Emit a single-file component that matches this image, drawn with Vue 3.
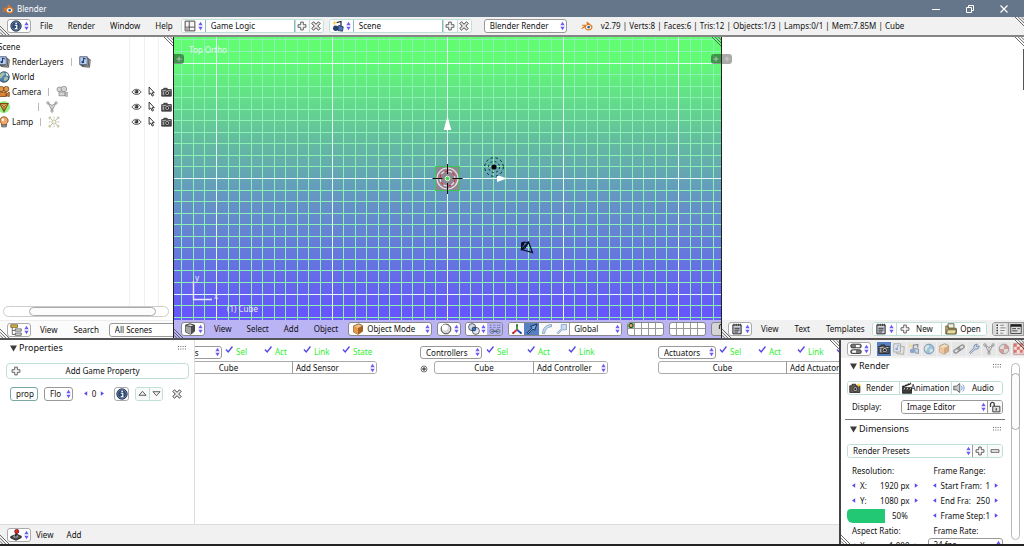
<script setup>
const rows = [
  { name: 'RenderLayers', icon: 'layers', data: 'layers', toggles: false },
  { name: 'World', icon: 'world', data: '', toggles: false },
  { name: 'Camera', icon: 'camobj', data: 'camdata', toggles: true },
  { name: 'Cube', icon: 'mesh', data: 'meshdata', toggles: true, active: true },
  { name: 'Lamp', icon: 'lamp', data: 'lampdata', toggles: true },
]

const step = 11.55
const originX = 273
const originY = 141
const range = (n) => Array.from({ length: n * 2 + 1 }, (_, i) => i - n)
const major = (i) => i % 10 === 0
const lines = [
  ...range(30).map((i) => ({ id: 'v' + i, d: `M${Math.round(originX + i * step) + 0.5} -20v330`, major: major(i) })),
  ...range(16).map((i) => ({ id: 'h' + i, d: `M-80 ${Math.round(originY + i * step) + 0.5}h710`, major: major(i) })),
].sort((a, b) => a.major - b.major)

const bricks = [
  { kind: 'Sensors', add: 'Add Sensor', checks: ['Sel', 'Act', 'Link', 'State'], cls: 'sensors' },
  { kind: 'Controllers', add: 'Add Controller', checks: ['Sel', 'Act', 'Link'], cls: 'controllers' },
  { kind: 'Actuators', add: 'Add Actuator', checks: ['Sel', 'Act', 'Link', 'State'], cls: 'actuators' },
]

const tabs = ['photo', 'layersdim', 'scenedim', 'worlddim', 'box', 'chain', 'wrench', 'meshdata', 'material', 'checker']

const resolution = [
  { label: 'X:', value: '1920 px' },
  { label: 'Y:', value: '1080 px' },
]
const frames = [
  { label: 'Start Fram:', value: '1' },
  { label: 'End Fra:', value: '250' },
  { label: 'Frame Step:', value: '1' },
]
</script>

<template>
  <svg class="defs" aria-hidden="true">
    <symbol id="arrows" viewBox="0 0 6 12"><path d="M3 1 5.600 5H.4zM3 11 .4 7h5.200z" fill="#6a5cf5" /></symbol>
    <symbol id="blender" viewBox="0 0 16 13">
      <path d="M8.600.8 15 6c1.400 3-1 6.500-5 6.500-3 0-5-2-5-4L1.200 10.600.4 9.600 4.600 6H1.300V4.700h6.500L7.200 1.900z" fill="#e27a1c" />
      <ellipse cx="10" cy="8" rx="3.400" ry="2.900" fill="#fff" /><circle cx="10.200" cy="8" r="1.700" fill="#2c5f96" />
    </symbol>
    <symbol id="info" viewBox="0 0 16 16">
      <circle cx="8" cy="8" r="7" fill="#2f4a73" stroke="#18263d" /><circle cx="8" cy="8" r="5.800" fill="none" stroke="#8fa6c9" stroke-width=".7" />
      <path d="M6.300 7h2.700v4.500h1M6.300 11.500h3.700" stroke="#fff" stroke-width="1.600" fill="none" /><circle cx="8.200" cy="4.400" r="1.200" fill="#fff" />
    </symbol>
    <symbol id="screen" viewBox="0 0 16 16">
      <path d="M1.500 1.500h13v13h-13z" fill="#f5f5f5" stroke="#444" stroke-width="1.300" /><path d="M7 2v12M7 9.500h7M2 9.500h5" stroke="#444" stroke-width="1.200" /><path d="M2.200 10.200h4v3.500h-4z" fill="#aaa" />
    </symbol>
    <symbol id="scene" viewBox="0 0 16 16">
      <path d="M6 3.500 12 2v8" stroke="#223" stroke-width="1.600" fill="none" /><circle cx="5" cy="11" r="3.600" fill="#26406f" /><path d="m9 7 6 2-1 6-6-1z" fill="#4c79bd" stroke="#1c2c4a" />
      <path d="M3.500 0 4.500 3l3 .8-3 1L3.500 8l-1-3.200L0 4l2.500-1z" fill="#f2d35b" />
    </symbol>
    <symbol id="plus" viewBox="0 0 14 14"><path d="M5.200 1.500h3.600v3.700h3.700v3.600H8.800v3.700H5.200V8.800H1.500V5.200h3.700z" fill="#fafafa" stroke="#555" stroke-width="1.300" /></symbol>
    <symbol id="minus" viewBox="0 0 14 14"><path d="M1.500 5.200h11v3.600h-11z" fill="#fafafa" stroke="#555" stroke-width="1.300" /></symbol>
    <symbol id="cross" viewBox="0 0 14 14"><path d="m3.500 1.200 3.500 3.400 3.500-3.400 2.300 2.300L9.400 7l3.400 3.500-2.300 2.300L7 9.400l-3.500 3.400-2.300-2.300L4.600 7 1.200 3.500z" fill="#eee" stroke="#333" stroke-width="1.300" /></symbol>
    <symbol id="layers" viewBox="0 0 16 16">
      <path d="m5 4 10 1-1 10-10-1z" fill="#d8d2b8" stroke="#333" /><path d="m3 2.500 10 .7-.5 10-10-.7z" fill="#eee" stroke="#333" /><path d="M1 1h10v10.500H1z" fill="#bcd0ee" stroke="#2b3c5c" />
      <path d="M6 8V3l3 1" stroke="#20407a" stroke-width="1.500" fill="none" /><circle cx="5" cy="8" r="1.800" fill="#20407a" />
    </symbol>
    <symbol id="layersdim" viewBox="0 0 16 16"><g opacity=".55"><path d="m6 4 9 1-1 10-9-1z" fill="#e8e4d5" stroke="#666" /><path d="M1 1h9v11H1z" fill="#dbe4f2" stroke="#667" /><circle cx="5" cy="8" r="1.800" fill="#5876a5" /><path d="M6 8V3l3 1" stroke="#5876a5" fill="none" /></g></symbol>
    <symbol id="scenedim" viewBox="0 0 16 16"><g opacity=".65"><path d="M7 9V3l6-1v4" stroke="#445" stroke-width="1.400" fill="none" /><circle cx="5.500" cy="10.500" r="3" fill="#5b84bd" /><path d="m9 7 5 1v6l-5-1z" fill="#a9c6ea" stroke="#456" /><circle cx="3.500" cy="4" r="2.400" fill="#f1dc86" /></g></symbol>
    <symbol id="world" viewBox="0 0 16 16"><circle cx="8" cy="8" r="7" fill="#4f81ae" stroke="#1d3044" /><path d="M3 4c3-3 6-2 6 0S6 6 5 9 2 8 2 7zm6 4c3-1 5 0 4 3l-4 3c-1-2-2-4 0-6z" fill="#a3c0a2" /><path d="M10 2c3 1 4 3 4 5l-3-1z" fill="#dfe9ef" /></symbol>
    <symbol id="worlddim" viewBox="0 0 16 16"><circle cx="8" cy="8" r="6.500" fill="#9cc2df" stroke="#6c8799" /><path d="M3 5c3-3 6-2 5 0S5 7 5 10 2 9 2 8zm6 3c3-1 5 0 4 3l-3 2c-1-2-2-4-1-5z" fill="#d6e6dc" /></symbol>
    <symbol id="camobj" viewBox="0 0 16 16"><circle cx="4.500" cy="4" r="3.500" fill="#e39a4f" stroke="#6b3b0d" /><circle cx="11" cy="4" r="3.500" fill="#e39a4f" stroke="#6b3b0d" /><path d="M2 8h9v6H2zM11 11l4-3v6l-4-1z" fill="#d88537" stroke="#6b3b0d" /></symbol>
    <symbol id="camdata" viewBox="0 0 16 16"><g fill="#d4d4d4" stroke="#888"><circle cx="4.500" cy="4.500" r="3.200" /><circle cx="10.500" cy="4" r="3.700" /><path d="M4 8h8v5H4zM12 10l3-2v6l-3-1z" /></g></symbol>
    <symbol id="mesh" viewBox="0 0 16 16"><circle cx="8" cy="8" r="8" fill="#8ff07f" /><path d="M2.500 3.500h11L8 14z" fill="#e8b163" stroke="#7c4a10" stroke-width="1.400" /><path d="m5 5 3 3 3-3M8 8v5" stroke="#7c4a10" fill="none" /></symbol>
    <symbol id="meshdata" viewBox="0 0 16 16"><path d="m3 3 5 3 5-3-5 10z" fill="#eee" stroke="#8a8a8a" stroke-width="1.200" /><path d="M8 6v7" stroke="#999" /><g fill="#fff" stroke="#777"><circle cx="2.500" cy="2.500" r="1.500" /><circle cx="13.500" cy="2.500" r="1.500" /><circle cx="8" cy="13.500" r="1.500" /></g></symbol>
    <symbol id="lamp" viewBox="0 0 16 16"><path d="M4.500 10C0 6 4 1 8 1s8 5 3.500 9v2h-7z" fill="#f0a968" stroke="#6b3b0d" /><path d="M5 12h6v2.500H5z" fill="#bbb" stroke="#444" /><circle cx="6.500" cy="5" r="1.600" fill="#fff" /></symbol>
    <symbol id="lampdata" viewBox="0 0 16 16"><g fill="#fbf8e4" stroke="#aaa58a"><circle cx="8" cy="8" r="2.800" /><circle cx="2.500" cy="2.500" r="1.300" /><circle cx="13.500" cy="2.500" r="1.300" /><circle cx="2.500" cy="13.500" r="1.300" /><circle cx="13.500" cy="13.500" r="1.300" /><path d="M8 1v2M8 13v2M1 8h2M13 8h2M4 4l1.500 1.500M12 4l-1.500 1.500M4 12l1.500-1.500M12 12l-1.500-1.500" /></g></symbol>
    <symbol id="eye" viewBox="0 0 16 12"><path d="M1 6c4-5.500 10-5.500 14 0-4 5-10 5-14 0z" fill="#fff" stroke="#333" stroke-width="1.200" /><circle cx="8" cy="5.500" r="2.900" fill="#333" /><circle cx="7" cy="4.500" r=".9" fill="#fff" /></symbol>
    <symbol id="cursor" viewBox="0 0 10 16"><path d="M1.500 1.500v10.700l2.500-2 2 4.500 2-1-2-4h3z" fill="#fff" stroke="#222" stroke-width="1.300" /></symbol>
    <symbol id="photo" viewBox="0 0 16 14"><path d="M1 3.500h3V1.500h5v2h6v9.500H1z" fill="#585858" stroke="#1c1c1c" /><path d="M2 5h12" stroke="#ddd" /><circle cx="9" cy="8.500" r="3.400" fill="#ccc" stroke="#111" /><circle cx="9" cy="8.500" r="1.600" fill="#222" /><path d="M2.500 6.500h2v5h-2z" fill="#aaa" /></symbol>
    <symbol id="flash" viewBox="0 0 16 14"><path d="M1 4h3V2h5v2h5.500v9H1z" fill="#655b52" stroke="#1c1c1c" /><circle cx="8.500" cy="8.500" r="3.200" fill="#ccc" stroke="#111" /><circle cx="8.500" cy="8.500" r="1.500" fill="#222" /><path d="m13 0 1 2 2 1-2 1-1 2-1-2-2-1 2-1z" fill="#ffd632" /></symbol>
    <symbol id="clap" viewBox="0 0 16 16"><path d="M2 7.500h12V15H2z" fill="#3d3d3d" stroke="#111" /><path d="m1 5.500 12-5 .8 2.600L2 7.500z" fill="#222" /><path d="m4 4.300 1.500 1.500M7.500 3l1.400 1.500M11 1.500l1.400 1.500M5 8l-1 2M9 8l-1 2M13 8l-1 2" stroke="#fff" /></symbol>
    <symbol id="speaker" viewBox="0 0 16 14"><path d="M1 4.500h3.500L9 1v12L4.500 9.500H1z" fill="#c9c9c9" stroke="#444" /><path d="M11 4c1.500 2 1.500 4 0 6M13 2.500c2.500 3 2.500 6 0 9" stroke="#6d9ad6" stroke-width="1.300" fill="none" /></symbol>
    <symbol id="tree" viewBox="0 0 16 16"><path d="M1 1h9v3.500H1z" fill="#d9b44a" stroke="#6b5415" /><path d="M3 5v9h4M3 8.500h4" stroke="#444" fill="none" /><path d="M7 6.500h8v3H7zM7 12h8v3H7z" fill="#e6e6e6" stroke="#444" /></symbol>
    <symbol id="cube" viewBox="0 0 16 16"><path d="m2 3 6-2 6 2v8l-5 4-7-3z" fill="#ddd" stroke="#222" stroke-width="1.200" /><path d="M9 5v10l5-4V3z" fill="#4c4c4c" /><path d="m2 3 7 2v10l-7-3z" fill="#a5a5a5" /><path d="m2 3 7 2 5-2" stroke="#222" fill="none" /></symbol>
    <symbol id="object" viewBox="0 0 16 16"><path d="m2 4 7-3 5 2.500V11l-6 4-6-3z" fill="#f0c187" stroke="#6b3b0d" /><path d="m2 4 6 2.500V15l-6-3z" fill="#e39a4f" /><path d="m8 6.500 6-3V11l-6 4z" fill="#a5621f" /></symbol>
    <symbol id="box" viewBox="0 0 16 16"><g opacity=".7"><path d="m2 4 7-3 5 2.500V11l-6 4-6-3z" fill="#f7dcb5" stroke="#80603a" /><path d="m2 4 6 2.500V15l-6-3z" fill="#f0bc83" /><path d="m8 6.500 6-3V11l-6 4z" fill="#cc9159" /></g></symbol>
    <symbol id="sphere" viewBox="0 0 16 16"><circle cx="8" cy="8" r="6.500" fill="#d7d7d7" stroke="#333" stroke-width="1.200" /><circle cx="6.500" cy="6" r="4" fill="#fff" /></symbol>
    <symbol id="pivot" viewBox="0 0 16 16"><circle cx="5.500" cy="5.500" r="4.700" fill="#cfd9ea" stroke="#334" /><circle cx="10.500" cy="10.500" r="4.700" fill="#dde7f6" fill-opacity=".8" stroke="#334" /><circle cx="8" cy="8" r="2.500" fill="#3d75c9" stroke="#134" /></symbol>
    <symbol id="points" viewBox="0 0 16 16"><path d="M1 3h3M6 3h3M11 3h4M1 6h3M6 6h3M11 6h4" stroke="#5d6d92" stroke-dasharray="1.500 1" stroke-width="1.500" /><g fill="#b9c6dd" stroke="#56668a"><circle cx="4" cy="11" r="2.800" /><circle cx="12" cy="11" r="2.800" /></g><path d="M3 11h10" stroke="#445577" stroke-width="1.400" /></symbol>
    <symbol id="axis" viewBox="0 0 16 16"><path d="M8 9V1.500" stroke="#3b9a3b" stroke-width="2.600" /><path d="m8 9-6 5" stroke="#d33" stroke-width="2.600" /><path d="m8 9 6 5" stroke="#3356c8" stroke-width="2.600" /><path d="m2 14 2-1.500M14 14l-2-1.500M8 2v2" stroke="#222" /></symbol>
    <symbol id="move" viewBox="0 0 16 16"><path d="M1.500 13 8 6.500 6 4.500 14.500 1.500l-3 8.500-2-2L3 14.500z" fill="#7ea9dc" stroke="#10284c" stroke-width="1.200" /></symbol>
    <symbol id="rotate" viewBox="0 0 16 16"><path d="M2 14C2 7 7 2 14 2v3C9 5 5 9 5 14z" fill="#c7dbf3" stroke="#7a95b8" /></symbol>
    <symbol id="scale" viewBox="0 0 16 16"><path d="M1.500 13 7 7.500V2h7v7H8.500L3 14.500z" fill="#c7dbf3" stroke="#7a95b8" /></symbol>
    <symbol id="textdoc" viewBox="0 0 16 16"><path d="M2.500 2.500h11v12h-11z" fill="#c9ced8" stroke="#222" stroke-width="1.300" /><path d="M4 1v3M7 1v3M10 1v3M12.500 1v3" stroke="#333" stroke-width="1.200" /><path d="M4.500 7h7M4.500 9.500h7M4.500 12h5" stroke="#222" stroke-width="1.200" /></symbol>
    <symbol id="folder" viewBox="0 0 16 16"><path d="M4 1h8v6H4z" fill="#eef3d8" stroke="#444" /><path d="M1 4h3v3h11v7.500H1z" fill="#c9b678" stroke="#4c4220" /><path d="M3 9h12l-1 5.500H2z" fill="#e6d9a2" stroke="#4c4220" /></symbol>
    <symbol id="numbers" viewBox="0 0 16 16"><path d="M1 1h14v14H1z" fill="#eee" /><path d="M2 3h2M2 6.500h2M2 10h2M2 13.500h2" stroke="#222" stroke-width="1.800" /><path d="M7 3h5M7 6.500h7M7 10h6M7 13.500h4" stroke="#666" /></symbol>
    <symbol id="wrap" viewBox="0 0 16 16"><path d="M1 2h14v12H1z" fill="#ddd" stroke="#222" /><path d="M1 3.500h14" stroke="#222" stroke-width="3" /><path d="M3 7.500h5M10 7.500h3M3 10.500h7" stroke="#333" stroke-width="1.200" /></symbol>
    <symbol id="props" viewBox="0 0 16 16"><g stroke="#222"><rect x="1" y="1.500" width="14" height="5" rx="2" fill="#777" /><rect x="1" y="9" width="14" height="5" rx="2" fill="#777" /></g><path d="M8 2.500h5v3H8zM3 10h5v3H3z" fill="#fff" /></symbol>
    <symbol id="chain" viewBox="0 0 16 16"><g fill="none" stroke="#8e8e8e" stroke-width="1.800"><rect x="1" y="7.500" width="9" height="4.500" rx="2.200" transform="rotate(-35 5.500 10)" /><rect x="6" y="4" width="9" height="4.500" rx="2.200" transform="rotate(-35 10.500 6)" /></g></symbol>
    <symbol id="wrench" viewBox="0 0 16 16"><path d="M2 12.500 8 6.500C7 3 10 1 12.500 1.700L10.500 4l1.500 1.600 2.500-2C15.500 7 12.500 9 9.500 8l-6 6.200z" fill="#cfe0f4" stroke="#6f87a7" stroke-width="1.200" /></symbol>
    <symbol id="material" viewBox="0 0 16 16"><circle cx="8" cy="8" r="6.500" fill="#ddd" stroke="#888" /><path d="M8 8V1.500A6.500 6.500 0 0 1 14.500 8zM8 8v6.500A6.500 6.500 0 0 1 1.500 8z" fill="#cf8d86" opacity=".8" /></symbol>
    <symbol id="checker" viewBox="0 0 16 16"><path d="M1 1h14v14H1z" fill="#f6e3e0" stroke="#b77" /><path d="M1 1h4v4H1zM9 1h4v4H9zM5 5h4v4H5zM13 5h2v4h-2zM1 9h4v4H1zM9 9h4v4H9z" fill="#d8766c" /></symbol>
    <symbol id="lock" viewBox="0 0 16 16"><path d="M2 8V4.500C2 1 7 1 7 4.500V7" stroke="#444" stroke-width="1.800" fill="none" /><path d="M5 7h9.500v7.500H5z" fill="#ddd" stroke="#333" stroke-width="1.200" /><path d="M9.700 9.500v3" stroke="#333" stroke-width="1.600" /></symbol>
    <symbol id="joystick" viewBox="0 0 16 16"><path d="m1 10 8-3 6 2.500v2L8 15l-7-3z" fill="#4c4c4c" stroke="#111" /><ellipse cx="7.500" cy="10" rx="3.500" ry="1.600" fill="#999" /><path d="m7.500 10 1-6" stroke="#222" stroke-width="1.800" /><circle cx="9" cy="3.200" r="2.700" fill="#d92c22" stroke="#701" /></symbol>
    <symbol id="up" viewBox="0 0 14 10"><path d="m7 1.500 5.500 6.300h-11z" fill="#eee" stroke="#444" stroke-width="1.300" /></symbol>
    <symbol id="down" viewBox="0 0 14 10"><path d="M7 8.500 1.500 2.200h11z" fill="#eee" stroke="#444" stroke-width="1.300" /></symbol>
    <symbol id="left" viewBox="0 0 5 6"><path d="M0 3 4 .2v5.600z" fill="#5a4bf0" /></symbol>
    <symbol id="right" viewBox="0 0 5 6"><path d="M5 3 1 .2v5.600z" fill="#5a4bf0" /></symbol>
    <symbol id="tri" viewBox="0 0 8 8"><path d="M0 .5h8L4 7.500z" fill="#3c3c3c" /></symbol>
    <symbol id="hatch" viewBox="0 0 10 10"><path d="M0 0l10 10M3.500 0 10 6.500M7 0l3 3" stroke="#444" stroke-width=".9" /></symbol>
    <symbol id="grip" viewBox="0 0 8 4"><path d="M0 .5h8M0 3h8" stroke="#666" stroke-dasharray="1 1.300" /></symbol>
    <symbol id="check" viewBox="0 0 8 8"><path d="m1 3.500 2.200 2.500L7.500 .5" fill="none" stroke="#5346e0" stroke-width="1.400" /></symbol>
  </svg>

  <div class="app">
    <header class="title">
      <svg class="logo"><use href="#blender" /></svg>
      <span class="caption">Blender</span>
      <div class="winbtns">
        <button aria-label="Minimize"><svg viewBox="0 0 10 10"><path d="M1 5.500h8" stroke="#fff" /></svg></button>
        <button aria-label="Restore"><svg viewBox="0 0 10 10"><path d="M1.500 3.500h5v5h-5zM3.500 3V1.500h5v5H7" fill="none" stroke="#fff" /></svg></button>
        <button aria-label="Close"><svg viewBox="0 0 10 10"><path d="m1.500 1.500 7 7m0-7-7 7" stroke="#fff" stroke-width="1.200" /></svg></button>
      </div>
    </header>

    <nav class="bar info">
      <svg class="hatch bl"><use href="#hatch" /></svg>
      <svg class="hatch tr"><use href="#hatch" /></svg>
      <button class="ed" aria-label="Editor type"><svg class="ic"><use href="#info" /></svg><svg class="ar"><use href="#arrows" /></svg></button>
      <div class="menus main">
        <button>File</button><button>Render</button><button>Window</button><button>Help</button>
      </div>
      <div class="group">
        <button class="ed" aria-label="Browse screens"><svg class="ic"><use href="#screen" /></svg><svg class="ar"><use href="#arrows" /></svg></button>
        <input class="name" value="Game Logic" aria-label="Screen name">
        <button class="sq" aria-label="Add screen"><svg class="sm"><use href="#plus" /></svg></button>
        <button class="sq" aria-label="Delete screen"><svg class="sm"><use href="#cross" /></svg></button>
      </div>
      <div class="group second">
        <button class="ed" aria-label="Browse scenes"><svg class="ic"><use href="#scene" /></svg><svg class="ar"><use href="#arrows" /></svg></button>
        <input class="name" value="Scene" aria-label="Scene name">
        <button class="sq" aria-label="Add scene"><svg class="sm"><use href="#plus" /></svg></button>
        <button class="sq" aria-label="Delete scene"><svg class="sm"><use href="#cross" /></svg></button>
      </div>
      <span class="pick engine"><select aria-label="Render engine"><option>Blender Render</option></select><svg class="ar"><use href="#arrows" /></svg></span>
      <svg class="logo stat"><use href="#blender" /></svg>
      <span class="stats">v2.79 | Verts:8 | Faces:6 | Tris:12 | Objects:1/3 | Lamps:0/1 | Mem:7.85M | Cube</span>
    </nav>

    <main class="upper">
      <section class="area outliner">
        <svg class="hatch tr"><use href="#hatch" /></svg>
        <div class="tree">
          <div class="row scene">Scene</div>
          <div v-for="r in rows" :key="r.name" class="row">
            <svg class="ic"><use :href="'#' + r.icon" /></svg>
            <span class="label" :class="{ active: r.active }">{{ r.name }}</span>
            <template v-if="r.data"><i class="sep"></i><svg class="ic"><use :href="'#' + r.data" /></svg></template>
            <span v-if="r.toggles" class="toggles">
              <button aria-label="Visibility"><svg class="eye"><use href="#eye" /></svg></button>
              <button aria-label="Selectability"><svg class="cur"><use href="#cursor" /></svg></button>
              <button aria-label="Renderability"><svg class="pho"><use href="#photo" /></svg></button>
            </span>
          </div>
          <div class="rules"><i></i><i></i><i></i></div>
        </div>
        <div class="hscroll"><i></i></div>
        <div class="bar">
          <svg class="hatch bl"><use href="#hatch" /></svg>
          <button class="ed" aria-label="Editor type"><svg class="ic"><use href="#tree" /></svg><svg class="ar"><use href="#arrows" /></svg></button>
          <div class="menus"><button>View</button><button>Search</button></div>
          <span class="pick scenes"><select aria-label="Display mode"><option>All Scenes</option></select></span>
        </div>
      </section>

      <section class="area viewport">
        <div class="canvas">
          <svg class="grid3d" viewBox="0 0 547 283" preserveAspectRatio="xMidYMid slice" aria-label="3D view">
            <g fill="none" shape-rendering="crispEdges">
              <path v-for="l in lines" :key="l.id" :d="l.d" :stroke="l.major ? '#e4faf4' : '#8cf2b4'" />
            </g>
            <path d="m273.500 79 3.800 14h-7.600zM333 141.500 323 138v7z" fill="#fff" />
            <path d="M261.500 129.500h24v24h-24z" fill="#8e8793" stroke="#35cf4b" />
            <circle cx="273.500" cy="141.500" r="10.500" fill="none" stroke="#e9dfe6" stroke-width="1.200" />
            <circle cx="273.500" cy="141.500" r="7.500" fill="none" stroke="#f3e4e8" stroke-width="1.200" />
            <circle cx="273.500" cy="141.500" r="7.500" fill="none" stroke="#c73545" stroke-width="1.400" stroke-dasharray="4 4" />
            <path d="M258.500 141.500h10M278.500 141.500h10M273.500 127v10M273.500 146v11" stroke="#111" />
            <circle cx="273.500" cy="141.500" r="2.300" fill="#3fdc4c" stroke="#fff" stroke-width=".8" />
            <g fill="none" stroke="#0c2a2a"><circle cx="320" cy="130" r="9.300" stroke-dasharray="2.500 2.500" /><circle cx="320" cy="130" r="5.500" stroke-dasharray="2 2.300" /></g>
            <circle cx="320" cy="130" r="2.600" fill="#050505" />
            <path d="m354.500 205 4 10.500-11-3zM354.500 205l-6.500.5-.5 7 3.500-1.500z" fill="none" stroke="#081024" stroke-width="1.200" />
            <path d="m347 206.500 4-2-1 3.500-3 3z" fill="#081024" />
            <path d="M19.500 244v18.500H38" stroke="#e9ecff" fill="none" stroke-width="1.400" />
          </svg>
          <span class="vt top">Top Ortho</span>
          <span class="vt ay">y</span><span class="vt ax">x</span>
          <span class="vt obj">(1) Cube</span>
          <button class="tab left" aria-label="Show tool shelf"><svg viewBox="0 0 10 10"><path d="M5 2.500v5M2.500 5h5" stroke="#bbb" /></svg></button>
          <button class="tab right" aria-label="Show properties"><svg viewBox="0 0 10 10"><path d="M5 2.500v5M2.500 5h5" stroke="#bbb" /></svg></button>
          <svg class="hatch tr"><use href="#hatch" /></svg>
        </div>
        <div class="bar purple">
          <svg class="hatch bl"><use href="#hatch" /></svg>
          <button class="ed" aria-label="Editor type"><svg class="ic"><use href="#cube" /></svg><svg class="ar"><use href="#arrows" /></svg></button>
          <div class="menus"><button>View</button><button>Select</button><button>Add</button><button>Object</button></div>
          <span class="pick mode"><svg class="ic pre"><use href="#object" /></svg><select aria-label="Mode"><option>Object Mode</option></select><svg class="ar"><use href="#arrows" /></svg></span>
          <button class="ed" aria-label="Viewport shading"><svg class="ic"><use href="#sphere" /></svg><svg class="ar"><use href="#arrows" /></svg></button>
          <div class="group pivot">
            <button class="ed" aria-label="Pivot point"><svg class="ic"><use href="#pivot" /></svg><svg class="ar"><use href="#arrows" /></svg></button>
            <button class="sq dim" aria-label="Manipulate centers"><svg class="ic"><use href="#points" /></svg></button>
          </div>
          <div class="group manip">
            <button class="sq" aria-label="Manipulator"><svg class="ic"><use href="#axis" /></svg></button>
            <button class="sq on" aria-label="Translate"><svg class="ic"><use href="#move" /></svg></button>
            <button class="sq" aria-label="Rotate"><svg class="ic"><use href="#rotate" /></svg></button>
            <button class="sq" aria-label="Scale"><svg class="ic"><use href="#scale" /></svg></button>
            <span class="pick orient"><select aria-label="Orientation"><option>Global</option></select><svg class="ar"><use href="#arrows" /></svg></span>
          </div>
          <div class="layers"><button v-for="n in 10" :key="n" :class="{ lit: n === 1 }" :aria-label="'Layer ' + n"></button></div>
          <div class="layers"><button v-for="n in 10" :key="n" :aria-label="'Layer ' + (n + 10)"></button></div>
          <button class="ed cut" aria-label="Lock to scene"><svg class="ic"><use href="#lock" /></svg></button>
        </div>
      </section>

      <section class="area texted">
        <svg class="hatch tr"><use href="#hatch" /></svg>
        <div class="page">
          <button class="tab left pale" aria-label="Show text properties"><svg viewBox="0 0 10 10"><path d="M5 2.500v5M2.500 5h5" stroke="#ccc" /></svg></button>
          <i class="thumb"></i>
        </div>
        <div class="bar">
          <svg class="hatch bl"><use href="#hatch" /></svg>
          <button class="ed" aria-label="Editor type"><svg class="ic"><use href="#textdoc" /></svg><svg class="ar"><use href="#arrows" /></svg></button>
          <div class="menus"><button>View</button><button>Text</button><button>Templates</button></div>
          <div class="group files">
            <button class="ed" aria-label="Browse text"><svg class="ic"><use href="#textdoc" /></svg><svg class="ar"><use href="#arrows" /></svg></button>
            <button class="lab"><svg class="sm"><use href="#plus" /></svg><span>New</span></button>
            <button class="lab"><svg class="ic"><use href="#folder" /></svg><span>Open</span></button>
          </div>
          <div class="group grey">
            <button class="sq" aria-label="Line numbers"><svg class="ic"><use href="#numbers" /></svg></button>
            <button class="sq" aria-label="Word wrap"><svg class="ic"><use href="#wrap" /></svg></button>
            <button class="sq" aria-label="Syntax highlight"><svg class="ic"><use href="#wrap" /></svg></button>
          </div>
        </div>
      </section>
    </main>

    <main class="lower">
      <section class="area logic">
        <svg class="hatch tr"><use href="#hatch" /></svg>
        <div class="lbody">
          <aside class="gameprops">
            <h2><svg class="tri"><use href="#tri" /></svg>Properties<svg class="grip"><use href="#grip" /></svg></h2>
            <button class="wide"><svg class="sm"><use href="#plus" /></svg><span>Add Game Property</span></button>
            <div class="prop">
              <input class="box pname" value="prop" aria-label="Property name">
              <span class="pick ptype"><select aria-label="Property type"><option>Flo</option></select><svg class="ar"><use href="#arrows" /></svg></span>
              <span class="num pval"><svg class="h"><use href="#left" /></svg><input value="0" aria-label="Property value"><svg class="h"><use href="#right" /></svg></span>
              <button class="box one" aria-label="Debug"><svg class="ic"><use href="#info" /></svg></button>
              <div class="group upd">
                <button class="sq" aria-label="Move up"><svg class="ud"><use href="#up" /></svg></button>
                <button class="sq" aria-label="Move down"><svg class="ud"><use href="#down" /></svg></button>
              </div>
              <button class="bare" aria-label="Remove property"><svg class="sm"><use href="#cross" /></svg></button>
            </div>
          </aside>
          <div class="bricks">
            <div v-for="b in bricks" :key="b.kind" class="brick" :class="b.cls">
              <div class="bh">
                <span class="pick kind"><select :aria-label="b.kind"><option>{{ b.kind }}</option></select><svg class="ar"><use href="#arrows" /></svg></span>
                <label v-for="c in b.checks" :key="c" class="chk"><input type="checkbox" checked><svg><use href="#check" /></svg><span>{{ c }}</span></label>
              </div>
              <div class="bl2">
                <button v-if="b.cls === 'controllers'" class="bare exp" aria-label="Expand"><svg viewBox="0 0 8 8"><circle cx="4" cy="4" r="3" fill="#fff" stroke="#555" stroke-width=".8" /><path d="M4 2v4M2 4h4" stroke="#222" /></svg></button>
                <div class="group addrow">
                  <button class="cube">Cube</button>
                  <span class="pick add"><select :aria-label="b.add"><option>{{ b.add }}</option></select><svg class="ar"><use href="#arrows" /></svg></span>
                </div>
              </div>
            </div>
          </div>
        </div>
        <div class="bar foot">
          <svg class="hatch bl"><use href="#hatch" /></svg>
          <button class="ed" aria-label="Editor type"><svg class="ic"><use href="#joystick" /></svg><svg class="ar"><use href="#arrows" /></svg></button>
          <div class="menus"><button>View</button><button>Add</button></div>
        </div>
      </section>

      <section class="area propsed">
        <svg class="hatch tr"><use href="#hatch" /></svg>
        <svg class="hatch bl"><use href="#hatch" /></svg>
        <div class="bar">
          <button class="ed" aria-label="Editor type"><svg class="ic"><use href="#props" /></svg><svg class="ar"><use href="#arrows" /></svg></button>
          <div class="tabs"><button v-for="(t, i) in tabs" :key="t" :class="{ on: i === 0 }" :aria-label="t"><svg class="ic"><use :href="'#' + t" /></svg></button></div>
        </div>
        <div class="pbody">
          <div class="panels">
            <h2><svg class="tri"><use href="#tri" /></svg>Render<svg class="grip"><use href="#grip" /></svg></h2>
            <div class="group three">
              <button class="lab"><svg class="ic"><use href="#flash" /></svg><span>Render</span></button>
              <button class="lab anim"><svg class="ic"><use href="#clap" /></svg><span>Animation</span></button>
              <button class="lab"><svg class="ic"><use href="#speaker" /></svg><span>Audio</span></button>
            </div>
            <div class="disp">
              <label for="display">Display:</label>
              <div class="group">
                <span class="pick"><select id="display"><option>Image Editor</option></select><svg class="ar"><use href="#arrows" /></svg></span>
                <button class="sq" aria-label="Lock interface"><svg class="ic"><use href="#lock" /></svg></button>
              </div>
            </div>
            <hr>
            <h2><svg class="tri"><use href="#tri" /></svg>Dimensions<svg class="grip"><use href="#grip" /></svg></h2>
            <div class="group presets">
              <span class="pick"><select aria-label="Render presets"><option>Render Presets</option></select><svg class="ar"><use href="#arrows" /></svg></span>
              <button class="sq" aria-label="Add preset"><svg class="sm"><use href="#plus" /></svg></button>
              <button class="sq" aria-label="Remove preset"><svg class="sm"><use href="#minus" /></svg></button>
            </div>
            <div class="two">
              <div class="col">
                <div class="cap">Resolution:</div>
                <label v-for="f in resolution" :key="f.label" class="num"><svg class="h"><use href="#left" /></svg><span>{{ f.label }}</span><input :value="f.value"><svg class="h"><use href="#right" /></svg></label>
                <label class="pct"><input type="range" min="0" max="100" value="50" aria-label="Resolution percentage"><span>50%</span></label>
                <div class="cap next">Aspect Ratio:</div>
                <label class="num"><svg class="h"><use href="#left" /></svg><span>X:</span><input value="1.000"><svg class="h"><use href="#right" /></svg></label>
              </div>
              <div class="col">
                <div class="cap">Frame Range:</div>
                <label v-for="f in frames" :key="f.label" class="num"><svg class="h"><use href="#left" /></svg><span>{{ f.label }}</span><input :value="f.value"><svg class="h"><use href="#right" /></svg></label>
                <div class="cap next">Frame Rate:</div>
                <span class="pick fps"><select aria-label="Frame rate"><option>24 fps</option></select><svg class="ar"><use href="#arrows" /></svg></span>
              </div>
            </div>
          </div>
          <div class="vscroll"><i></i></div>
        </div>
      </section>
    </main>
  </div>
</template>

<style>
body { margin: 0; background: #fff; }
</style>

<style scoped>
.defs { position: absolute; width: 0; height: 0; }
.app {
  height: 100vh; min-height: 400px; box-sizing: border-box; overflow: hidden;
  display: grid; grid-template-rows: 17px 20px minmax(0, 303fr) minmax(0, 204fr);
  font: 8px/12px "Noto Sans", "DejaVu Sans", sans-serif; color: #111;
  border-bottom: 2px solid #222;
}
.app *, .app *::before { box-sizing: border-box; }
button, input, select { font: inherit; color: inherit; margin: 0; padding: 0; border: 0; background: none; min-width: 0; border-radius: 0; appearance: none; outline: none; }
svg { display: block; flex: none; }
.ic { width: 12px; height: 12px; }
.sm { width: 10px; height: 10px; }
.ar { width: 5px; height: 10px; }
.logo { width: 12px; height: 10px; }
.hatch { position: absolute; width: 9px; height: 9px; z-index: 2; }
.hatch.tr { top: 0; right: 0; }
.hatch.bl { bottom: 0; left: 0; transform: rotate(180deg); }

.title { background: #66768a; color: #fff; display: flex; align-items: center; padding-left: 2px; gap: 3px; }
.winbtns { margin-left: auto; display: flex; margin-right: 3px; }
.winbtns button { width: 34px; height: 15px; display: grid; place-items: center; }
.winbtns svg { width: 10px; height: 10px; }

.bar { position: relative; display: flex; align-items: center; height: 18px; background: #f1f1f1; padding-left: 7px; white-space: nowrap; flex: none; overflow: hidden; }
.info { height: auto; border-bottom: 2px solid #858585; }
.ed { width: 24px; height: 14px; flex: none; display: flex; align-items: center; justify-content: center; gap: 2px; background: #fff; border: 1px solid #aaa; border-radius: 3px; }
.menus { display: flex; gap: 15px; margin-left: 9px; }
.group { display: flex; height: 14px; flex: none; border: 1px solid #bfe0d8; border-radius: 3px; background: #fff; overflow: hidden; }
.group > * + * { border-left: 1px solid #bfe0d8; }
.group .ed { border-width: 0; border-radius: 0; height: 12px; width: 23px; }
.info .menus { margin-right: 8px; }
.info .sq { width: 14px; }
.name { width: 90px; padding-left: 5px; border-left: 1px solid #8cbcb8 !important; border-right: 1px solid #8cbcb8; }
.sq { width: 15px; display: grid; place-items: center; background: #fafafa; }
.second { margin-left: 5px; }
.pick { position: relative; display: flex; height: 14px; background: #fff; border: 1px solid #999; border-radius: 3px; min-width: 0; overflow: hidden; }
.pick select { width: 100%; height: 100%; padding-left: 5px; line-height: 12px; }
.pick .ar { position: absolute; right: 1px; top: 50%; margin-top: -5px; pointer-events: none; }
.group .pick { border-width: 0; border-radius: 0; height: 12px; }
.group > .pick + *, .group > * + .pick { border-left: 1px solid #999; }
.engine { width: 83px; margin-left: 12px; }
.stat { margin: 0 8px 0 14px; }

.upper { display: grid; grid-template-columns: minmax(0, 174fr) minmax(0, 548fr) minmax(0, 302fr); border-bottom: 2px solid #555; }
.area { position: relative; display: flex; flex-direction: column; min-width: 0; min-height: 0; overflow: hidden; background: #fff; }
.outliner, .viewport { border-right: 1px solid #222; }
.outliner .bar { background: #fbfbfb; border-top: 1px solid #eee; }
.outliner .menus { gap: 16px; }
.tree { flex: 1; position: relative; padding-top: 2px; min-height: 0; }
.row { position: relative; display: flex; align-items: center; height: 15px; margin-left: -2px; }
.row .sep { width: 1px; height: 8px; background: #bbb; margin: 0 7px; }
.label { margin-left: 2px; }
.label.active { color: #fff; }
.toggles { margin-left: auto; display: flex; gap: 3px; padding-right: 1px; z-index: 1; }
.toggles button { width: 12px; display: grid; place-items: center; }
.eye { width: 11px; height: 8px; } .cur { width: 7px; height: 11px; } .pho { width: 11px; height: 10px; }
.rules { position: absolute; top: 0; bottom: 0; right: 0; width: 44px; display: flex; }
.rules i { flex: 1; border-left: 1px solid #f0f0f0; }
.hscroll { height: 11px; margin: 0 4px 3px 3px; border: 1px solid #ccc; border-radius: 6px; flex: none; }
.hscroll i { display: block; height: 9px; margin: 0 12px 0 25px; border: 1px solid #aaa; border-radius: 5px; background: #fcfcfc; }
.scenes { width: 80px; margin-left: 10px; flex: none; }

.canvas { flex: 1; position: relative; min-height: 0; background: linear-gradient(#62fd70, #62fb76 9%, #64bba0 37%, #6590c8 60%, #6676df 78%, #6656fb 97%); overflow: hidden; }
.grid3d { width: 100%; height: 100%; }
.vt { position: absolute; color: #e4f2f2; }
.top { left: 15px; top: 7px; } .ay { left: 21px; bottom: 36px; } .ax { left: 40px; bottom: 18px; } .obj { left: 53px; bottom: 5px; }
.tab { position: absolute; top: 17px; width: 10px; height: 10px; background: #0006; }
.tab.left { left: 0; border-radius: 0 3px 3px 0; } .tab.right { right: 0; border-radius: 3px 0 0 3px; }
.tab.pale { background: #aaa; }
.purple { background: #bab4f4; }
.purple .ed, .purple .group, .purple .pick { border-color: #888; }
.mode { width: 84px; margin: 0 5px 0 10px; align-items: center; padding-left: 3px; flex: none; }
.mode select { padding-left: 3px; }
.purple .group > * + * { border-left-color: #999; }
.pivot { margin: 0 5px 0 4px; background: #bab4f4; }
.pivot .ed { width: 21px; gap: 1px; }
.dim { background: #bab4f4; border-left: 0 !important; }
.manip .sq { border: 0; }
.manip .on { background: #5680c2; }
.orient { width: 52px; }
.orient select { padding-left: 4px; }
.layers { display: grid; grid-template-columns: repeat(5, 7px); grid-template-rows: repeat(2, 6px); margin-left: 5px; border: 1px solid #888; border-radius: 3px; overflow: hidden; background: #fff; height: 14px; flex: none; }
.layers button:not(:nth-child(5n)) { border-right: 1px solid #999; }
.layers button:nth-child(-n+5) { border-bottom: 1px solid #999; }
.layers .lit { background: radial-gradient(circle, #e2a25c 1px, #333 2px, #6fe57c 3px); }
.cut { margin-left: 5px; background: #d5d5d5; justify-content: flex-end; width: 20px; }

.page { flex: 1; position: relative; }
.thumb { position: absolute; right: 0; top: 12px; width: 1px; height: 41px; background: #555; }
.texted .bar { padding-left: 6px; }
.texted .menus { gap: 16px; }
.files { margin-left: 8px; }
.lab { display: flex; align-items: center; padding: 0 3px; background: #fff; }
.lab span { flex: 1; text-align: center; }
.files .lab { width: 45px; border-left-color: #bfe0d8; }
.grey { margin-left: 5px; border-color: #999; }
.grey .sq { background: #d8d8d8; border-left-color: #999; }

.lower { display: grid; grid-template-columns: minmax(0, 841fr) minmax(0, 183fr); }
.logic { border-right: 2px solid #444; }
.lbody { flex: 1; display: grid; grid-template-columns: 195px minmax(0, 1fr); min-height: 0; }
.gameprops { border-right: 1px solid #ddd; }
h2 { margin: 0; font: inherit; font-size: 9px; display: flex; align-items: center; height: 16px; }
.tri { width: 7px; height: 7px; margin-right: 2px; }
.grip { width: 8px; height: 4px; margin-left: auto; }
.gameprops h2 { padding: 0 8px 0 10px; }
.wide { display: flex; align-items: center; margin: 7px 0 0 6px; height: 16px; width: 183px; border: 1px solid #bfe0d8; border-radius: 4px; padding: 0 4px; }
.wide span { flex: 1; text-align: center; }
.prop { display: flex; align-items: center; margin: 7px 0 0 10px; }
.box { height: 14px; border: 1px solid #aaa; border-radius: 3px; }
.pname { width: 28px; padding-left: 5px; border-color: #78a8a8; }
.ptype { width: 29px; margin: 0 11px 0 6px; }
.num { display: flex; align-items: center; height: 15px; }
.h { width: 4px; height: 5px; }
.num input { text-align: right; flex: 1; width: 0; padding-right: 4px; }
.num span { margin-left: 4px; }
.pval { width: 20px; }
.pval input { text-align: center; padding: 0; }
.one { width: 15px; margin: 0 6px 0 10px; display: grid; place-items: center; }
.ud { width: 9px; height: 7px; }
.upd { width: 28px; }
.upd .sq { width: 13px; }
.bare { margin-left: 9px; }
.bricks { display: grid; grid-template-columns: minmax(0, 225fr) minmax(0, 238fr) minmax(0, 181fr); overflow: hidden; }
.brick { min-width: 0; overflow: hidden; white-space: nowrap; padding-top: 5px; }
.bh { display: flex; height: 14px; align-items: center; }
.kind { flex: none; height: 13px; width: 62px; }
.chk { display: flex; width: 39px; flex: none; color: #2df02d; }
.chk input { position: absolute; opacity: 0; }
.chk svg { width: 8px; height: 8px; margin-right: 3px; }
.chk:first-of-type { margin-left: 3px; }
.controllers .chk { width: 41px; }
.controllers .chk:first-of-type { margin-left: 4px; }
.sensors .kind { margin-left: -35px; }
.sensors .kind select { padding-left: 8px; }
.actuators .kind { width: 58px; }
.bl2 { display: flex; margin-top: 2px; }
.addrow { height: 13px; border-color: #aaa; flex: none; }
.addrow .pick { height: 11px; border-left: 1px solid #999; }
.addrow .pick select { padding-left: 3px; }
.sensors .addrow { margin-left: -31px; }
.cube { width: 127px; text-align: center; }
.controllers .cube { width: 98px; }
.add { width: 84px; }
.controllers .add { width: 74px; }
.exp { width: 8px; margin: 2px 6px 0 0; } .exp svg { width: 8px; height: 8px; }
.foot { height: 20px; border-top: 1px solid #ddd; }
.foot .menus { margin-left: 5px; gap: 13px; }

.propsed .bar { padding-left: 6px; }
.tabs { display: flex; margin-left: 6px; gap: 1px; }
.tabs button { width: 14px; height: 14px; display: grid; place-items: center; flex: none; background: #e6e6e6; }
.tabs .on { background: #5680c2; }
.pbody { flex: 1; min-height: 0; display: flex; overflow: hidden; }
.panels { flex: 1; min-width: 0; padding-left: 6px; }
.panels h2 { padding: 0 2px 0 3px; }
.three { margin-top: 7px; display: grid; grid-template-columns: repeat(3, minmax(0, 1fr)); }
.three .lab { padding: 0 1px; min-width: 0; }
.three .anim svg { margin-right: -3px; }
.disp { display: flex; justify-content: space-between; align-items: center; padding-left: 5px; margin-top: 5px; }
.disp .group { width: 102px; border-color: #999; }
.disp .pick, .presets .pick { flex: 1; }
hr { border: 0; border-top: 1px solid #777; margin: 5px -2px 1px; }
.presets { margin-top: 7px; }
.two { display: grid; grid-template-columns: repeat(2, minmax(0, 1fr)); gap: 5px; margin-top: 6px; }
.cap { height: 14px; padding-left: 5px; line-height: 14px; }
.next { margin-top: 1px; }
.two .num { padding: 0 5px; }
.col + .col .cap { padding-left: 6px; }
.pct { display: grid; height: 15px; align-items: center; }
.pct > * { grid-area: 1 / 1; }
.pct input { width: 100%; height: 14px; border-radius: 4px 0 0 6px; background: linear-gradient(90deg, #22c873 50%, #fff 50%); }
.pct input::-webkit-slider-thumb { appearance: none; width: 0; }
.pct span { padding-left: 45px; }
.vscroll { width: 9px; margin: 5px 4px 4px 8px; border: 1px solid #bbb; border-radius: 5px; flex: none; padding-top: 9px; }
.vscroll i { display: block; width: 9px; margin-left: -1px; height: 57px; border: 1px solid #aaa; border-radius: 5px; background: #fcfcfc; }
</style>
